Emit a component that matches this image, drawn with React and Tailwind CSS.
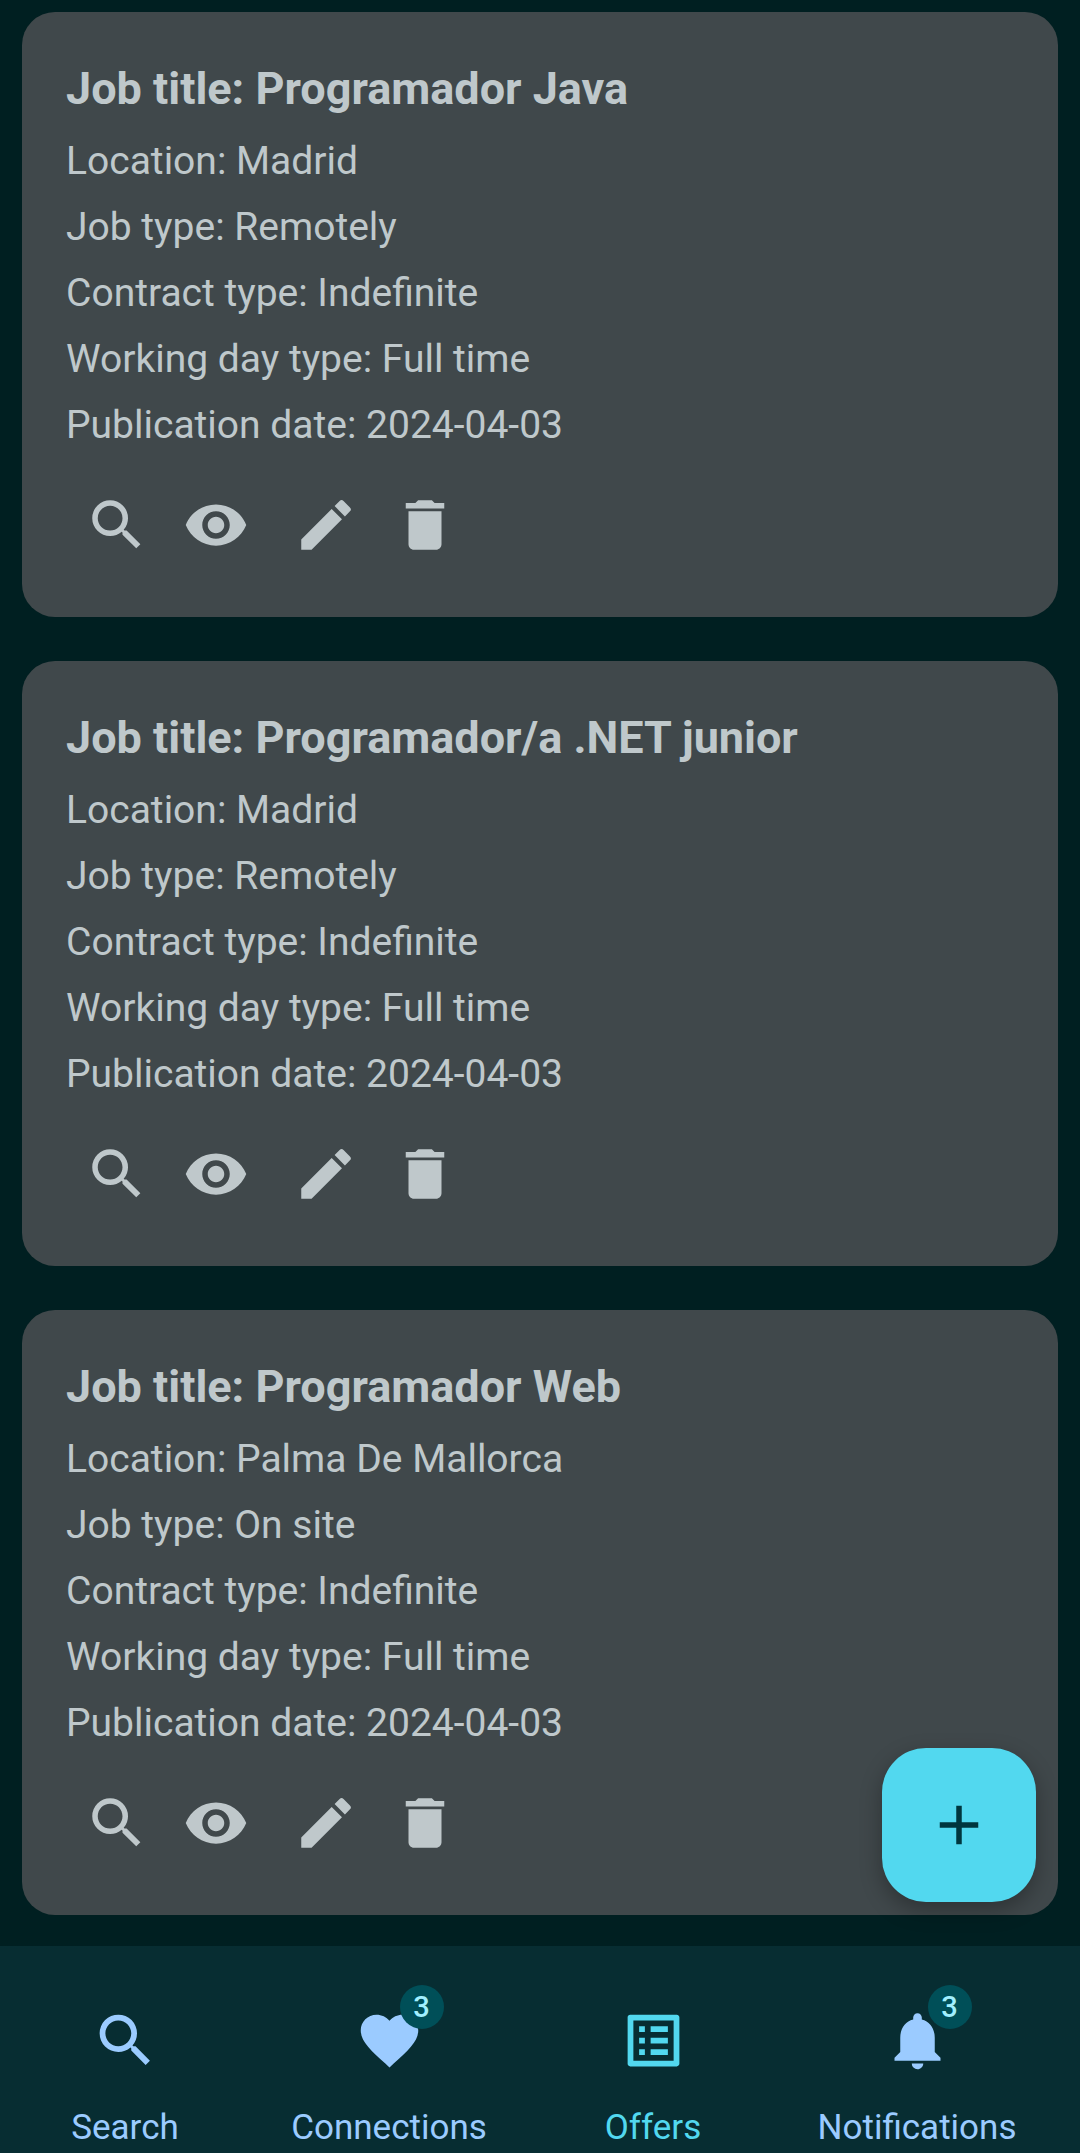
import {
  MdAdd,
  MdDelete,
  MdEdit,
  MdFavorite,
  MdListAlt,
  MdNotifications,
  MdSearch,
  MdVisibility,
} from "react-icons/md";

const offers = [
  {
    title: "Programador Java",
    location: "Madrid",
    jobType: "Remotely",
    contract: "Indefinite",
    workingDay: "Full time",
    published: "2024-04-03",
  },
  {
    title: "Programador/a .NET junior",
    location: "Madrid",
    jobType: "Remotely",
    contract: "Indefinite",
    workingDay: "Full time",
    published: "2024-04-03",
  },
  {
    title: "Programador Web",
    location: "Palma De Mallorca",
    jobType: "On site",
    contract: "Indefinite",
    workingDay: "Full time",
    published: "2024-04-03",
  },
];

const tabs = [
  { label: "Search", Icon: MdSearch },
  { label: "Connections", Icon: MdFavorite, badge: 3 },
  { label: "Offers", Icon: MdListAlt, active: true },
  { label: "Notifications", Icon: MdNotifications, badge: 3 },
];

function IconButton({ label, Icon }) {
  return (
    <button
      type="button"
      aria-label={label}
      className="flex h-[134px] w-[99px] items-center justify-center"
    >
      <Icon className="size-[66px]" />
    </button>
  );
}

function OfferCard({ offer }) {
  return (
    <article className="rounded-[33px] bg-[#40484b] px-11 pt-11 pb-[25px] text-[#bfc8cb]">
      <h2 className="text-[45px] leading-[66px] font-bold">Job title: {offer.title}</h2>
      <div className="mt-1.5 text-[39px] leading-[66px]">
        <p>Location: {offer.location}</p>
        <p>Job type: {offer.jobType}</p>
        <p>Contract type: {offer.contract}</p>
        <p>Working day type: {offer.workingDay}</p>
        <p>Publication date: {offer.published}</p>
      </div>
      <div className="flex gap-[11px] pl-px">
        <div className="flex">
          <IconButton label="Search candidates" Icon={MdSearch} />
          <IconButton label="View offer" Icon={MdVisibility} />
        </div>
        <div className="flex">
          <IconButton label="Edit offer" Icon={MdEdit} />
          <IconButton label="Delete offer" Icon={MdDelete} />
        </div>
      </div>
    </article>
  );
}

function Tab({ label, Icon, badge, active }) {
  return (
    <a
      href="#"
      aria-current={active ? "page" : undefined}
      className={`flex flex-col items-center gap-[31px] ${active ? "text-[#52d8ef]" : "text-[#9bcbff]"}`}
    >
      <span className="relative">
        <Icon className="size-[69px]" />
        {badge && (
          <span className="absolute -top-[21px] left-[45px] flex size-11 items-center justify-center rounded-full bg-[#004f58] text-[29px] leading-none font-medium text-[#a1efff]">
            {badge}
          </span>
        )}
      </span>
      <span className="text-[35px] leading-[44px]">{label}</span>
    </a>
  );
}

export default function App() {
  return (
    <div className="flex min-h-screen flex-col bg-[#001f21] font-[Roboto,sans-serif]">
      <main className="flex flex-1 flex-col gap-11 px-[22px] pt-3 pb-[31px]">
        {offers.map((offer) => (
          <OfferCard key={offer.title} offer={offer} />
        ))}
      </main>
      <footer className="sticky bottom-0">
        <button
          type="button"
          aria-label="Add offer"
          className="absolute right-11 bottom-full mb-11 flex size-[154px] items-center justify-center rounded-[44px] bg-[#52d8ef] text-[#00363e] shadow-[0_8px_22px_rgba(0,0,0,0.3)]"
        >
          <MdAdd className="size-[66px]" />
        </button>
        <nav className="relative grid grid-cols-4 gap-[22px] bg-[#072d32] pt-[60px] pr-[42px] pb-[3px] pl-1">
          {tabs.map((tab) => (
            <Tab key={tab.label} {...tab} />
          ))}
        </nav>
      </footer>
    </div>
  );
}
